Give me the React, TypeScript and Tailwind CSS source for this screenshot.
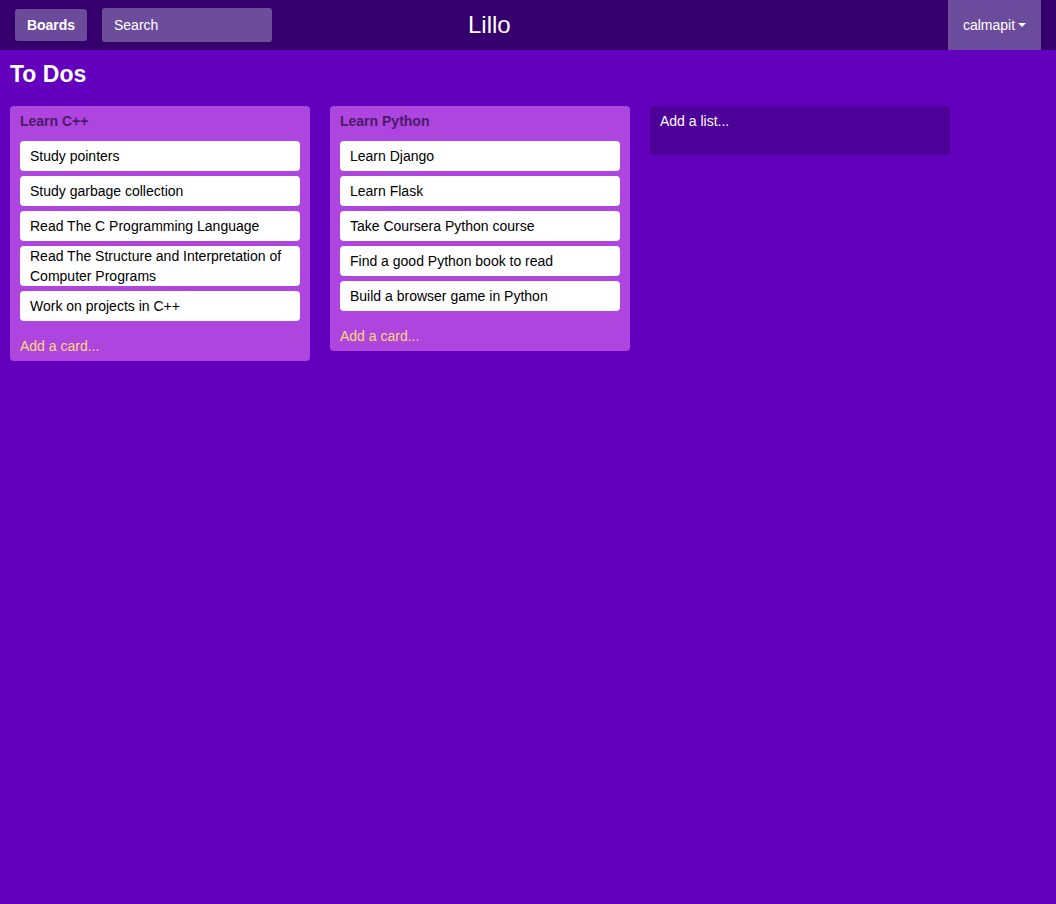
import React from "react";

const lists = [
  {
    title: "Learn C++",
    cards: [
      "Study pointers",
      "Study garbage collection",
      "Read The C Programming Language",
      "Read The Structure and Interpretation of Computer Programs",
      "Work on projects in C++",
    ],
  },
  {
    title: "Learn Python",
    cards: [
      "Learn Django",
      "Learn Flask",
      "Take Coursera Python course",
      "Find a good Python book to read",
      "Build a browser game in Python",
    ],
  },
];

export default function App() {
  return (
    <div
      className="min-h-[904px] w-full bg-[#6300bd] text-[14px] text-white"
      style={{ fontFamily: '"Liberation Sans", Arial, Helvetica, sans-serif' }}
    >
      <header className="flex h-[50px] items-center bg-[#35006e]">
        <div className="ml-[15px] flex h-[32px] w-[72px] items-center justify-center rounded-[3px] bg-[#6b4a9b] font-bold">
          Boards
        </div>
        <div className="ml-[15px] flex h-[34px] w-[170px] items-center rounded-[3px] bg-[#6c4d9c] pl-[12px]">
          Search
        </div>
        <div className="ml-[196px] text-[24px] leading-none">Lillo</div>
        <div className="flex-1" />
        <div className="mr-[15px] flex h-full w-[93px] items-center justify-center bg-[#6b4b9c]">
          <span>calmapit</span>
          <svg width="8" height="5" viewBox="0 0 8 5" className="ml-[3px]">
            <path d="M0 0 L8 0 L4 4 Z" fill="white" />
          </svg>
        </div>
      </header>
      <div className="px-[10px]">
        <h1 className="pt-[10px] text-[23px] font-bold leading-[28px]">To Dos</h1>
        <div className="mt-[18px] flex items-start gap-[20px]">
          {lists.map((l) => (
            <div key={l.title} className="w-[300px] rounded-[4px] bg-[#af45df] px-[10px] pt-[7px] pb-[5px]">
              <div className="text-[14px] font-bold leading-[16px] text-[#4a1b6b]">{l.title}</div>
              <div className="mt-[12px] flex flex-col gap-[5px]">
                {l.cards.map((c) => (
                  <div
                    key={c}
                    className="flex min-h-[30px] items-center rounded-[4px] bg-white px-[10px] leading-[20px] text-black"
                  >
                    {c}
                  </div>
                ))}
              </div>
              <div className="mt-[15px] leading-[20px] text-[#fbd97a]">Add a card...</div>
            </div>
          ))}
          <div className="h-[49px] w-[300px] rounded-[4px] bg-[#4e009b] px-[10px] pt-[7px] leading-[16px]">
            Add a list...
          </div>
        </div>
      </div>
    </div>
  );
}
